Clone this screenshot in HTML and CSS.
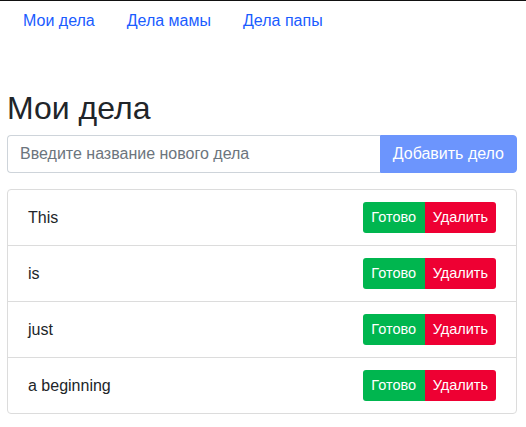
FILE: index.html
```html
<!DOCTYPE html>
<html lang="ru">
<head>
<meta charset="utf-8">
<title>Мои дела</title>
<link rel="stylesheet" href="styles.css">
</head>
<body>
<nav class="nav">
  <a class="nav-link" href="#">Мои дела</a>
  <a class="nav-link" href="#">Дела мамы</a>
  <a class="nav-link" href="#">Дела папы</a>
</nav>
<main class="container">
  <h1 class="title">Мои дела</h1>
  <form class="input-group">
    <input class="form-control" type="text" placeholder="Введите название нового дела">
    <button class="btn-add" type="button" disabled>Добавить дело</button>
  </form>
  <ul class="list">
    <li class="item"><span class="item-text">This</span><div class="btn-group"><button class="btn btn-done">Готово</button><button class="btn btn-del">Удалить</button></div></li>
    <li class="item"><span class="item-text">is</span><div class="btn-group"><button class="btn btn-done">Готово</button><button class="btn btn-del">Удалить</button></div></li>
    <li class="item"><span class="item-text">just</span><div class="btn-group"><button class="btn btn-done">Готово</button><button class="btn btn-del">Удалить</button></div></li>
    <li class="item"><span class="item-text">a beginning</span><div class="btn-group"><button class="btn btn-done">Готово</button><button class="btn btn-del">Удалить</button></div></li>
  </ul>
</main>
</body>
</html>
```
FILE: styles.css
```css
* { box-sizing: border-box; }
html, body { margin: 0; padding: 0; }
body {
  font-family: "Liberation Sans", Arial, sans-serif;
  font-size: 16px;
  line-height: 1.5;
  color: #212529;
  background: #fff;
  border-top: 1px solid #111;
}
.nav {
  display: flex;
  padding-left: 7px;
}
.nav-link {
  display: block;
  padding: 8px 16px;
  color: #1a5cff;
  text-decoration: none;
}
.container {
  padding: 0 9px 0 7px;
}
.title {
  margin: 48px 0 8px;
  font-size: 32px;
  font-weight: 400;
  line-height: 1.2;
}
.input-group {
  display: flex;
  margin: 0 0 16px;
}
.form-control {
  flex: 1;
  min-width: 0;
  height: 38px;
  padding: 6px 12px;
  font: inherit;
  color: #212529;
  border: 1px solid #ced4da;
  border-right: 0;
  border-radius: 4px 0 0 4px;
  outline: none;
}
.form-control::placeholder { color: #6c757d; }
.btn-add {
  height: 38px;
  padding: 6px 12px;
  font: inherit;
  color: #fff;
  background: #6c95fd;
  border: 1px solid #6c95fd;
  border-radius: 0 4px 4px 0;
}
.list {
  list-style: none;
  margin: 0;
  padding: 0;
  border: 1px solid #dcdcdc;
  border-radius: 4px;
}
.item {
  display: flex;
  align-items: center;
  justify-content: space-between;
  padding: 12px 20px;
}
.item + .item { border-top: 1px solid #dcdcdc; }
.btn-group { display: flex; }
.btn {
  height: 31px;
  font-family: inherit;
  font-size: 14.5px;
  line-height: 1.5;
  color: #fff;
  border: 0;
}
.btn-done {
  padding: 4px 8.5px;
  background: #00b64f;
  border-radius: 3px 0 0 3px;
}
.btn-del {
  padding: 4px 8px;
  background: #ee0033;
  border-radius: 0 3px 3px 0;
}
```
